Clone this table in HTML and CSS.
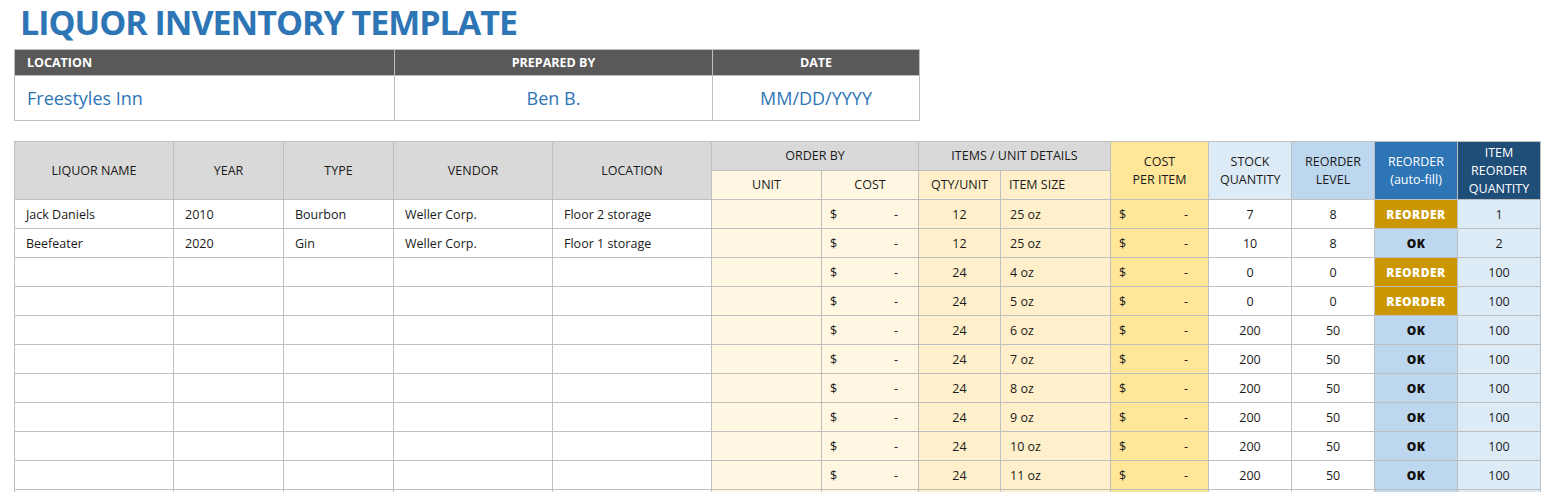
FILE: index.html
```html
<!DOCTYPE html>
<html>
<head>
<meta charset="utf-8">
<link rel="stylesheet" href="styles.css">
</head>
<body>
<div class="page">
  <h1 class="title">LIQUOR INVENTORY TEMPLATE</h1>
  <table class="info">
    <colgroup><col class="c-loc"><col class="c-prep"><col class="c-date"></colgroup>
    <tr class="info-head"><th class="left">LOCATION</th><th>PREPARED BY</th><th>DATE</th></tr>
    <tr class="info-val"><td class="left">Freestyles Inn</td><td>Ben B.</td><td>MM/DD/YYYY</td></tr>
  </table>
  <table class="inv">
    <colgroup>
      <col class="w159"><col class="w110"><col class="w110"><col class="w159"><col class="w159">
      <col class="w110"><col class="w97"><col class="w82"><col class="w110"><col class="w98">
      <col class="w83"><col class="w83"><col class="w83"><col class="w83">
    </colgroup>
    <thead>
      <tr class="h1">
        <th rowspan="2" class="g">LIQUOR NAME</th>
        <th rowspan="2" class="g">YEAR</th>
        <th rowspan="2" class="g">TYPE</th>
        <th rowspan="2" class="g">VENDOR</th>
        <th rowspan="2" class="g">LOCATION</th>
        <th colspan="2" class="g">ORDER BY</th>
        <th colspan="2" class="g">ITEMS / UNIT DETAILS</th>
        <th rowspan="2" class="y3">COST<br>PER ITEM</th>
        <th rowspan="2" class="b1">STOCK<br>QUANTITY</th>
        <th rowspan="2" class="b2">REORDER<br>LEVEL</th>
        <th rowspan="2" class="b3">REORDER<br>(auto-fill)</th>
        <th rowspan="2" class="b4">ITEM<br>REORDER<br>QUANTITY</th>
      </tr>
      <tr class="h2">
        <th class="y1">UNIT</th>
        <th class="y1">COST</th>
        <th class="y2">QTY/UNIT</th>
        <th class="y2 left">ITEM SIZE</th>
      </tr>
    </thead>
    <tbody>
      <tr><td>Jack Daniels</td><td>2010</td><td>Bourbon</td><td>Weller Corp.</td><td>Floor 2 storage</td><td class="y1"></td><td class="y1 money"><span>$</span><span>-</span></td><td class="y2 c">12</td><td class="y2">25 oz</td><td class="y3 money"><span>$</span><span>-</span></td><td class="c">7</td><td class="c">8</td><td class="st re">REORDER</td><td class="b1 c">1</td></tr>
      <tr><td>Beefeater</td><td>2020</td><td>Gin</td><td>Weller Corp.</td><td>Floor 1 storage</td><td class="y1"></td><td class="y1 money"><span>$</span><span>-</span></td><td class="y2 c">12</td><td class="y2">25 oz</td><td class="y3 money"><span>$</span><span>-</span></td><td class="c">10</td><td class="c">8</td><td class="st ok">OK</td><td class="b1 c">2</td></tr>
      <tr><td></td><td></td><td></td><td></td><td></td><td class="y1"></td><td class="y1 money"><span>$</span><span>-</span></td><td class="y2 c">24</td><td class="y2">4 oz</td><td class="y3 money"><span>$</span><span>-</span></td><td class="c">0</td><td class="c">0</td><td class="st re">REORDER</td><td class="b1 c">100</td></tr>
      <tr><td></td><td></td><td></td><td></td><td></td><td class="y1"></td><td class="y1 money"><span>$</span><span>-</span></td><td class="y2 c">24</td><td class="y2">5 oz</td><td class="y3 money"><span>$</span><span>-</span></td><td class="c">0</td><td class="c">0</td><td class="st re">REORDER</td><td class="b1 c">100</td></tr>
      <tr><td></td><td></td><td></td><td></td><td></td><td class="y1"></td><td class="y1 money"><span>$</span><span>-</span></td><td class="y2 c">24</td><td class="y2">6 oz</td><td class="y3 money"><span>$</span><span>-</span></td><td class="c">200</td><td class="c">50</td><td class="st ok">OK</td><td class="b1 c">100</td></tr>
      <tr><td></td><td></td><td></td><td></td><td></td><td class="y1"></td><td class="y1 money"><span>$</span><span>-</span></td><td class="y2 c">24</td><td class="y2">7 oz</td><td class="y3 money"><span>$</span><span>-</span></td><td class="c">200</td><td class="c">50</td><td class="st ok">OK</td><td class="b1 c">100</td></tr>
      <tr><td></td><td></td><td></td><td></td><td></td><td class="y1"></td><td class="y1 money"><span>$</span><span>-</span></td><td class="y2 c">24</td><td class="y2">8 oz</td><td class="y3 money"><span>$</span><span>-</span></td><td class="c">200</td><td class="c">50</td><td class="st ok">OK</td><td class="b1 c">100</td></tr>
      <tr><td></td><td></td><td></td><td></td><td></td><td class="y1"></td><td class="y1 money"><span>$</span><span>-</span></td><td class="y2 c">24</td><td class="y2">9 oz</td><td class="y3 money"><span>$</span><span>-</span></td><td class="c">200</td><td class="c">50</td><td class="st ok">OK</td><td class="b1 c">100</td></tr>
      <tr><td></td><td></td><td></td><td></td><td></td><td class="y1"></td><td class="y1 money"><span>$</span><span>-</span></td><td class="y2 c">24</td><td class="y2">10 oz</td><td class="y3 money"><span>$</span><span>-</span></td><td class="c">200</td><td class="c">50</td><td class="st ok">OK</td><td class="b1 c">100</td></tr>
      <tr><td></td><td></td><td></td><td></td><td></td><td class="y1"></td><td class="y1 money"><span>$</span><span>-</span></td><td class="y2 c">24</td><td class="y2">11 oz</td><td class="y3 money"><span>$</span><span>-</span></td><td class="c">200</td><td class="c">50</td><td class="st ok">OK</td><td class="b1 c">100</td></tr>
      <tr><td></td><td></td><td></td><td></td><td></td><td class="y1"></td><td class="y1"></td><td class="y2"></td><td class="y2"></td><td class="y3"></td><td></td><td></td><td class="st ok"></td><td class="b1"></td></tr>
    </tbody>
  </table>
</div>
</body>
</html>
```

FILE: styles.css
```css
* { box-sizing: border-box; }
html, body { margin: 0; padding: 0; background: #fff; }
body { font-family: "Open Sans", "DejaVu Sans", sans-serif; color: #1a1a1a; overflow: hidden; height: 492px; }
.page { padding: 0 0 0 14px; }
.title {
  margin: 0;
  height: 49px;
  padding-top: 2px;
  padding-left: 6px;
  font-family: "Open Sans", sans-serif;
  font-weight: 700;
  font-size: 34px;
  line-height: 40px;
  color: #2e75b6;
  letter-spacing: -1px;
}
.info { border-collapse: collapse; table-layout: fixed; width: 905px; }
.c-loc { width: 380px; }
.c-prep { width: 318px; }
.c-date { width: 207px; }
.info th, .info td { border: 1px solid #bfbfbf; text-align: center; }
.info-head th { background: #595959; color: #fff; font-size: 12.5px; font-weight: 700; height: 26px; padding: 0 12px; }
.info-val td { color: #2e75b6; font-size: 18px; height: 45px; padding: 0 12px; }
.info .left { text-align: left; }

.inv { border-collapse: collapse; table-layout: fixed; width: 1527px; margin-top: 20px; }
.w159 { width: 159px; }
.w110 { width: 110px; }
.w97 { width: 97px; }
.w98 { width: 98px; }
.w82 { width: 82px; }
.w83 { width: 83px; }
.inv th, .inv td { border: 1px solid #bfbfbf; font-size: 12.5px; height: 29px; padding: 0 11px; white-space: nowrap; overflow: hidden; }
.inv th { font-weight: 400; text-align: center; line-height: 18px; }
.inv th.b4 { line-height: 18px; padding: 0; vertical-align: middle; }
.inv th.left { text-align: left; padding-left: 8px; }
.g { background: #d9d9d9; }
.y1 { background: #fff7e1; }
.y2 { background: #fff0cb; }
.y3 { background: #ffe699; }
.b1 { background: #ddebf7; }
.b2 { background: #bdd7ee; }
th.b3 { background: #2e75b6; color: #fff; }
th.b4 { background: #1f4e79; color: #fff; }
.inv td.c { text-align: center; }
.inv td.y2:not(.c) { padding-left: 9px; }
.inv td.money { padding: 0 20px 0 8px; }
.money span:first-child { float: left; }
.money span:last-child { float: right; }
.inv td.st { text-align: center; font-weight: 800; font-size: 12px; letter-spacing: 0.5px; }
.st.re { background: #cc9600; color: #fff; }
.st.ok { background: #bdd7ee; color: #111; }
```
